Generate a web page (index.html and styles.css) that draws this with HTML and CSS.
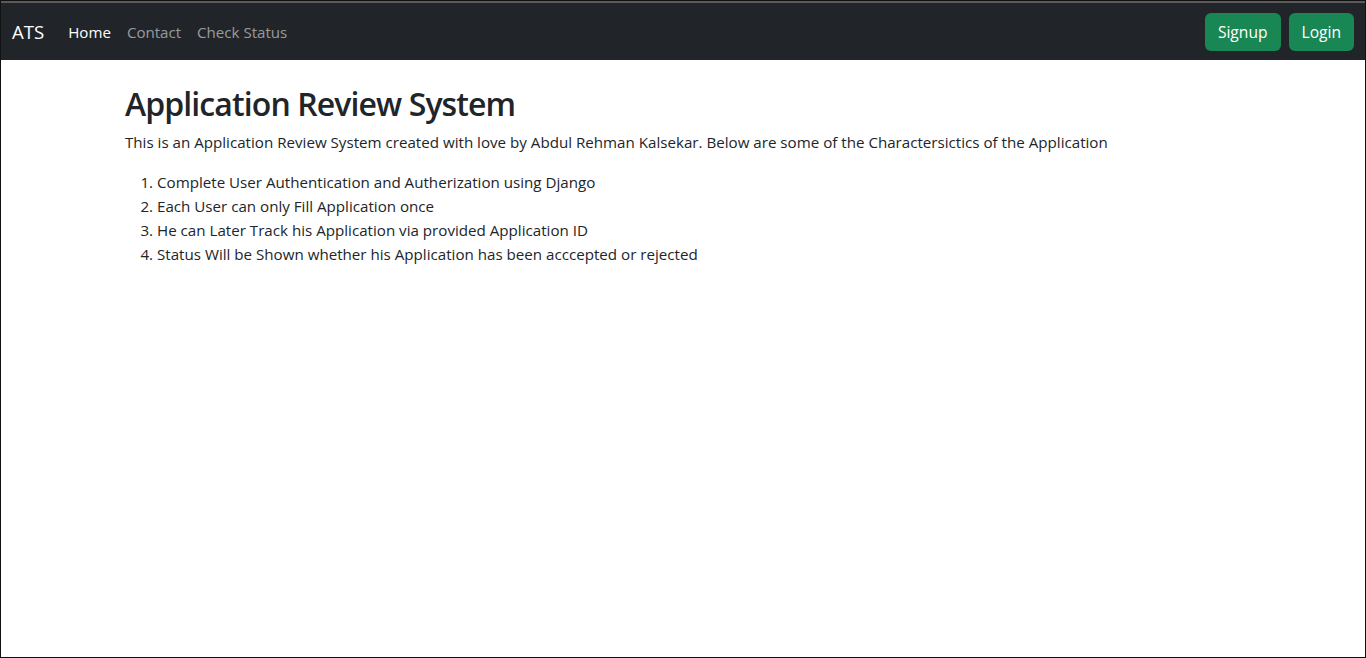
FILE: index.html
```html
<!DOCTYPE html>
<html lang="en">
<head>
<meta charset="utf-8">
<title>ATS</title>
<link rel="stylesheet" href="styles.css">
</head>
<body>
<div class="frame">
  <div class="topstrip"></div>
  <nav class="navbar">
    <div class="nav-left">
      <a class="brand" href="#">ATS</a>
      <ul class="nav-links">
        <li><a class="active" href="#">Home</a></li>
        <li><a href="#">Contact</a></li>
        <li><a href="#">Check Status</a></li>
      </ul>
    </div>
    <div class="nav-right">
      <a class="btn" href="#">Signup</a>
      <a class="btn" href="#">Login</a>
    </div>
  </nav>
  <main class="container">
    <h1>Application Review System</h1>
    <p>This is an Application Review System created with love by Abdul Rehman Kalsekar. Below are some of the Charactersictics of the Application</p>
    <ol>
      <li>Complete User Authentication and Autherization using Django</li>
      <li>Each User can only Fill Application once</li>
      <li>He can Later Track his Application via provided Application ID</li>
      <li>Status Will be Shown whether his Application has been acccepted or rejected</li>
    </ol>
  </main>
</div>
</body>
</html>
```
FILE: styles.css
```css
* { box-sizing: border-box; }
html, body { margin: 0; padding: 0; }
body {
  font-family: "Open Sans", "Noto Sans", sans-serif;
  font-size: 15.15px;
  line-height: 24px;
  color: #212529;
  background: #fff;
}
.frame {
  width: 1366px;
  height: 658px;
  border: 1px solid #111;
  border-top: none;
  overflow: hidden;
}
.topstrip {
  height: 3px;
  background: #1c1c1c;
  border-top: 1px solid #111;
  border-bottom: 2px solid #5a5a5a;
}
.navbar {
  height: 57px;
  background: #212529;
  display: flex;
  align-items: center;
  justify-content: space-between;
  padding: 0 11px 0 11px;
}
.nav-left { display: flex; align-items: center; }
.brand {
  color: #fff;
  text-decoration: none;
  font-size: 18.6px;
  margin-right: 16px;
}
.nav-links {
  list-style: none;
  margin: 0;
  padding: 0;
  display: flex;
}
.nav-links a {
  display: block;
  padding: 8px;
  color: rgba(255,255,255,.55);
  text-decoration: none;
  font-size: 15.1px;
}
.nav-links a.active { color: #fff; }
.nav-right { display: flex; gap: 8px; }
.btn {
  display: inline-block;
  background: #198754;
  color: #fff;
  text-decoration: none;
  font-size: 15.6px;
  line-height: 24px;
  padding: 7px 13px;
  border-radius: 6px;
}
.container {
  width: 1140px;
  margin: 0 auto;
  padding: 16px 12px 0;
}
h1 {
  font-size: 32px;
  font-weight: 600;
  line-height: 40px;
  letter-spacing: -0.9px;
  margin: 8px 0 6px;
}
p { margin: 0 0 16px; }
ol { margin: 0; padding-left: 32px; }
```
